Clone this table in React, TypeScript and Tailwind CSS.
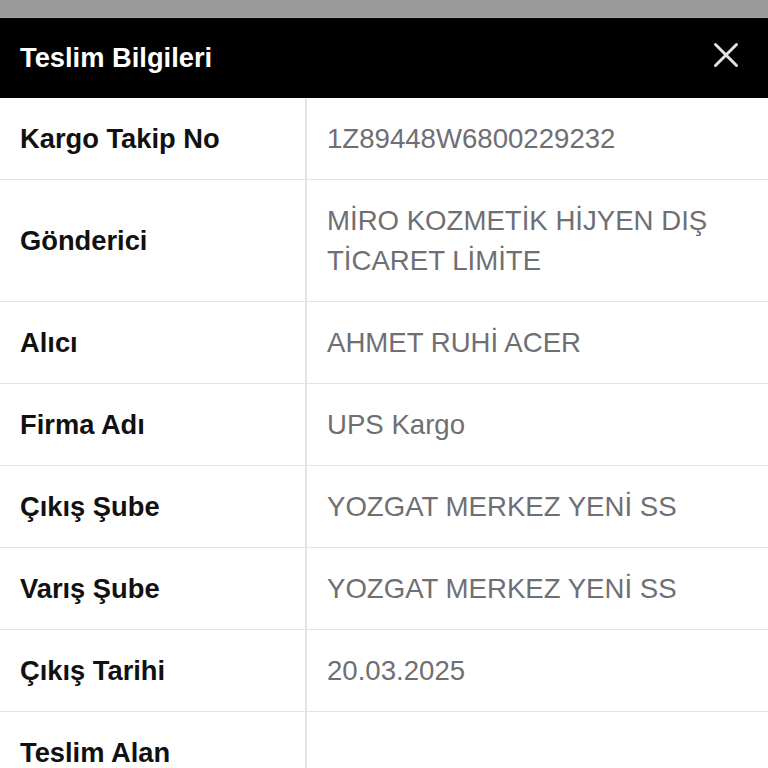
import React from "react";

const rows: { label: string; value: string }[] = [
  { label: "Kargo Takip No", value: "1Z89448W6800229232" },
  { label: "Gönderici", value: "MİRO KOZMETİK HİJYEN DIŞ TİCARET LİMİTE" },
  { label: "Alıcı", value: "AHMET RUHİ ACER" },
  { label: "Firma Adı", value: "UPS Kargo" },
  { label: "Çıkış Şube", value: "YOZGAT MERKEZ YENİ SS" },
  { label: "Varış Şube", value: "YOZGAT MERKEZ YENİ SS" },
  { label: "Çıkış Tarihi", value: "20.03.2025" },
  { label: "Teslim Alan", value: "" },
];

export default function App() {
  return (
    <div
      className="w-[768px] h-[768px] overflow-hidden bg-white"
      style={{ fontFamily: '"Liberation Sans", Arial, sans-serif' }}
    >
      <div className="h-[18px] bg-[#9b9b9b] border-b border-[#a8a8a8]" />
      <div className="h-[80px] bg-black flex items-center justify-between pl-[20px] pr-[29px]">
        <span className="text-white font-bold text-[27.3px] leading-none">Teslim Bilgileri</span>
        <svg width="26" height="26" viewBox="0 0 26 26" className="mb-[6px]">
          <path d="M2.5 2.5 L23.5 23.5 M23.5 2.5 L2.5 23.5" stroke="#e2e2e2" strokeWidth="3" strokeLinecap="round" />
        </svg>
      </div>
      <div className="flex flex-col">
        {rows.map((r, i) => (
          <div key={i} className="flex border-b border-[#e4e4e4]">
            <div className="w-[307px] shrink-0 border-r-2 border-[#e4e4e4] px-[20px] py-[20.5px] flex items-center">
              <span className="font-bold text-[27.3px] leading-[40px] text-[#111]">{r.label}</span>
            </div>
            <div className="flex-1 pl-[20px] pr-[40px] py-[20.5px] flex items-center">
              <span className="text-[27.6px] leading-[40px] text-[#6f6f73]">{r.value || "\u00a0"}</span>
            </div>
          </div>
        ))}
      </div>
    </div>
  );
}
